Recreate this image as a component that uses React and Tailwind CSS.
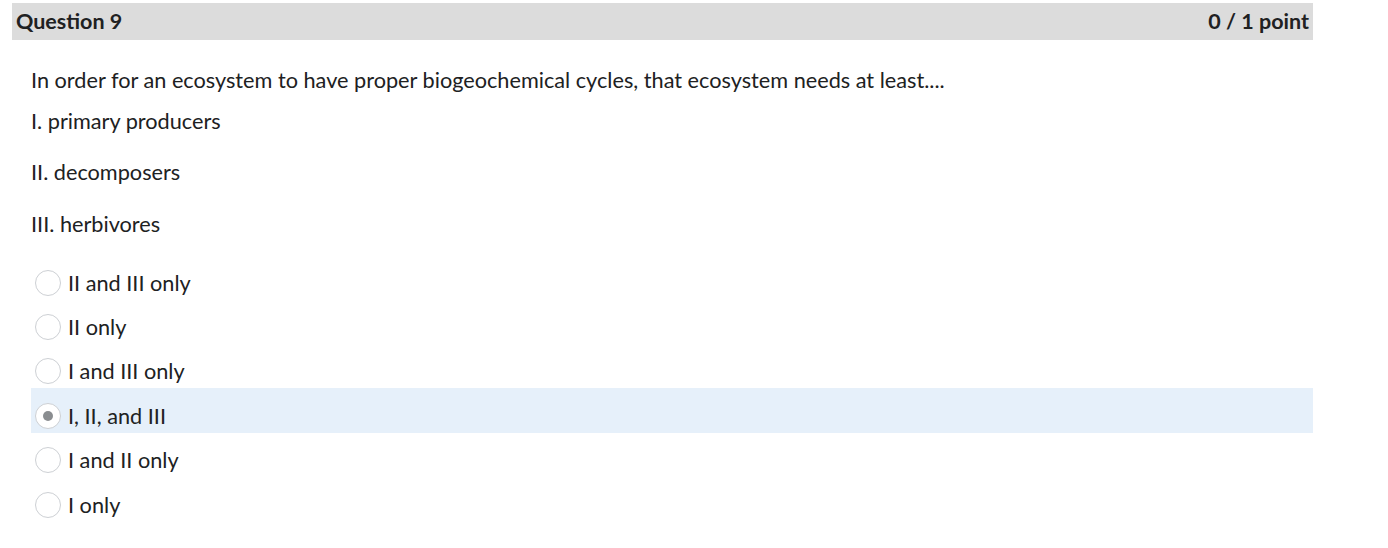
export default function App() {
  const options = ["II and III only", "II only", "I and III only", "I, II, and III", "I and II only", "I only"];
  return (
    <div className="w-[1388px] h-[548px] bg-white text-[#202122]" style={{ fontFamily: "Lato, 'Noto Sans', sans-serif" }}>
      <div className="pt-[3px] pl-[12px] w-[1313px]">
        <div className="h-[37px] bg-[#dcdcdc] flex items-center justify-between pl-[4px] pr-[4px]">
          <span className="text-[21.5px] font-bold">Question 9</span>
          <span className="text-[21.5px] font-bold">0 / 1 point</span>
        </div>
      </div>
      <div className="pl-[31px] w-[1313px] text-[21.7px] text-[#202122]">
        <p className="mt-[26px] leading-[28px]">In order for an ecosystem to have proper biogeochemical cycles, that ecosystem needs at least....</p>
        <p className="mt-[13px] leading-[28px]">I. primary producers</p>
        <p className="mt-[23px] leading-[28px]">II. decomposers</p>
        <p className="mt-[24px] leading-[28px]">III. herbivores</p>
        <div className="mt-[17px] flex flex-col">
          {options.map((o, i) => {
            const sel = i === 3;
            return (
              <div key={o} className={`h-[44.4px] flex items-center pt-[11px] pl-[4px] ${sel ? "bg-[#e6f0fa]" : ""}`}>
                <span className="w-[26px] h-[26px] rounded-full border border-[#cdd0d4] bg-white flex items-center justify-center shrink-0">
                  {sel && <span className="w-[10px] h-[10px] rounded-full bg-[#8a8d90]" />}
                </span>
                <span className="ml-[7px] leading-[28px]">{o}</span>
              </div>
            );
          })}
        </div>
      </div>
    </div>
  );
}
